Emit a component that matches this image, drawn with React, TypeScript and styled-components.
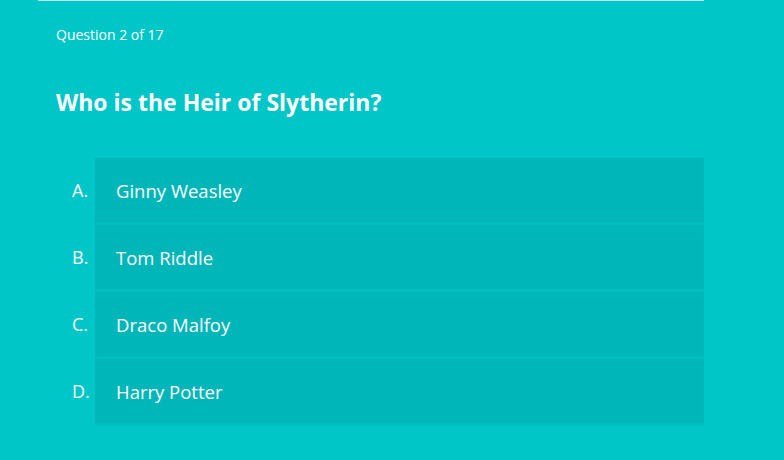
import { createGlobalStyle, styled } from "styled-components";

const GlobalStyle = createGlobalStyle`
  html, body {
    margin: 0;
    padding: 0;
    background-color: #00c6c8;
    font-family: "Open Sans", "Noto Sans", sans-serif;
    color: #ffffff;
  }
`;

const Page = styled.div`
  width: 784px;
  height: 460px;
  overflow: hidden;
  background-color: #00c6c8;
`;

const Quiz = styled.section`
  width: 666px;
  margin-left: 38px;
  border-top: 1px solid rgba(255, 255, 255, 0.75);
  padding: 24px 0 0 18px;
  box-sizing: border-box;
`;

const Counter = styled.div`
  font-size: 14px;
  line-height: 20px;
`;

const Question = styled.h2`
  margin: 42px 0 0;
  font-size: 23px;
  line-height: 30px;
  font-weight: 700;
`;

const Answers = styled.ol`
  list-style: none;
  margin: 41px 0 0;
  padding: 0;
`;

const Answer = styled.li`
  display: flex;
  align-items: stretch;
  height: 67px;
`;

const Letter = styled.span`
  width: 39px;
  padding-left: 16px;
  box-sizing: border-box;
  display: flex;
  align-items: center;
  font-size: 18px;
  padding-bottom: 3px;
`;

const Choice = styled.button`
  flex: 1;
  display: flex;
  align-items: center;
  padding: 0 0 0 21px;
  margin: 0;
  border: 0;
  border-bottom: 3px solid #00bec0;
  background-color: #00b6b9;
  color: #ffffff;
  font-family: inherit;
  font-size: 18.5px;
  text-align: left;
  cursor: pointer;
`;

const answers = ["Ginny Weasley", "Tom Riddle", "Draco Malfoy", "Harry Potter"];

export default function App() {
  return (
    <>
      <GlobalStyle />
      <Page>
        <Quiz>
          <Counter>Question 2 of 17</Counter>
          <Question>Who is the Heir of Slytherin?</Question>
          <Answers>
            {answers.map((a, i) => (
              <Answer key={a}>
                <Letter>{String.fromCharCode(65 + i)}.</Letter>
                <Choice>{a}</Choice>
              </Answer>
            ))}
          </Answers>
        </Quiz>
      </Page>
    </>
  );
}
